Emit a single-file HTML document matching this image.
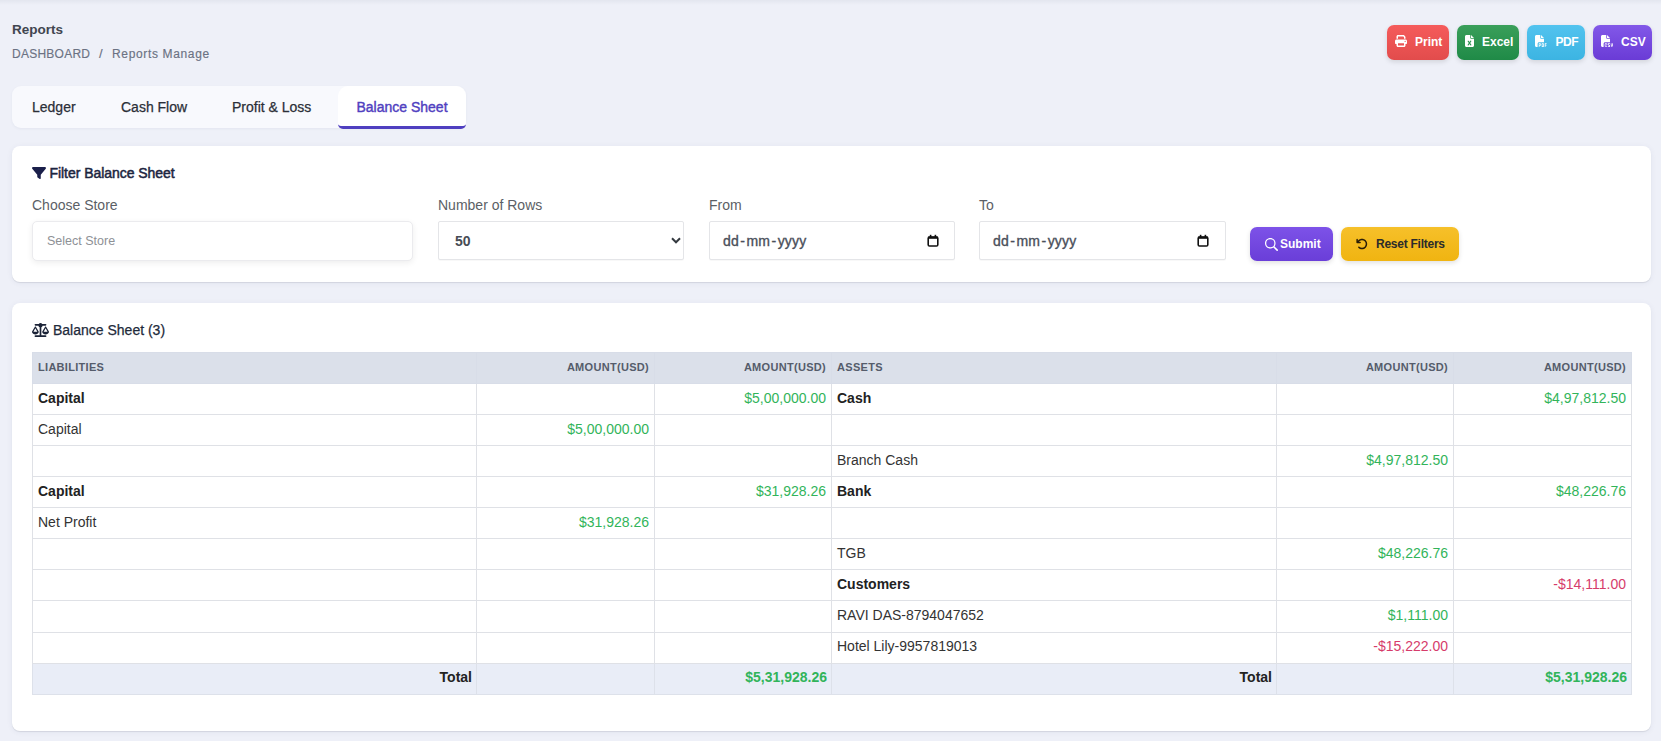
<!DOCTYPE html>
<html><head><meta charset="utf-8">
<style>
*{box-sizing:border-box;margin:0;padding:0}
html,body{width:1661px;height:741px;overflow:hidden}
body{position:relative;background:#eef0f8;font-family:"Liberation Sans",sans-serif;color:#333}
.abs{position:absolute;white-space:nowrap}
.ic{position:absolute;z-index:2}
.hy{font-style:normal;margin:0 1.3px}
.topshade{position:absolute;left:0;top:0;width:1661px;height:5px;background:linear-gradient(#e3e6ef,#eef0f8)}
.title{left:12px;top:21px;font-size:13.5px;line-height:17px;font-weight:bold;color:#40454f}
.crumb{top:46px;font-size:12px;line-height:16px;color:#6b7283;-webkit-text-stroke:0.15px #6b7283}
.btn{position:absolute;top:25px;height:35px;border-radius:7px;color:#fff;font-size:12px;font-weight:bold;line-height:35px;box-shadow:0 2px 5px rgba(0,0,0,.12)}
.btn svg{position:absolute}
.btn span{position:absolute;top:0}
.tabs{position:absolute;left:12px;top:86px;width:454px;height:42px;border-radius:9px;background:#f8f9fd;box-shadow:0 1px 3px rgba(40,50,100,.05)}
.tab{position:absolute;top:0px;height:41px;line-height:42px;-webkit-text-stroke:0.25px currentColor;font-size:14px;color:#2b2f38}
.tab.active{height:43px;background:#fff;border-radius:10px 10px 5px 5px;border-bottom:3px solid #4f3fc0;color:#5040c0;-webkit-text-stroke:0.4px #5040c0}
.card{position:absolute;background:#fff;border-radius:8px;box-shadow:0 1px 1px rgba(0,0,20,.09),0 1px 6px rgba(40,50,110,.06)}
.lbl{font-size:14px;line-height:16px;color:#5b5f66}

.inp{position:absolute;height:39px;border:1px solid #e4e5e8;border-radius:2px;background:#fff;box-shadow:0 1px 1px rgba(0,0,0,.03)}
table{position:absolute;left:32px;top:352px;border-collapse:collapse;table-layout:fixed;width:1599px}
td,th{height:31px;padding:0 5px 2px 5px;font-size:14px;border:1px solid #dfe1e6;white-space:nowrap;overflow:hidden}
th{background:#dbe0ea;font-size:11px;font-weight:bold;color:#555c6b;letter-spacing:.3px;text-align:left;border-color:#d8dde8}
.r{text-align:right}
.b{font-weight:bold;color:#222}
.g{color:#32b45a}
.n{color:#d63c6b}
.tall td{height:32px;padding-bottom:3px}
.hot td{padding-bottom:4px}
tfoot td{background:#e9edf7;font-weight:bold;padding-bottom:4px;border-color:#dde1ea}
tfoot td.r{padding-right:4px}
</style></head><body>
<div class="topshade"></div>
<div class="abs title">Reports</div>
<div class="abs crumb" style="left:12px;letter-spacing:0.25px">DASHBOARD</div><div class="abs crumb" style="left:99px;font-size:13px;top:45.5px">/</div><div class="abs crumb" style="left:112px;letter-spacing:0.65px">Reports Manage</div>

<div class="btn" style="left:1387px;width:62px;background:linear-gradient(#f55b5b,#e24c4c)"><svg style="left:8px;top:10px" width="12" height="12" viewBox="0 0 512 512"><path fill="#fff" d="M128 0C92.7 0 64 28.7 64 64v96h64V64H354.5L384 93.5V160h64V93.5c0-17-6.7-33.3-18.7-45.3L400 18.7C388 6.7 371.7 0 354.7 0H128zM384 352v32 64H128V384 368 352H384zm64 32h32c17.7 0 32-14.3 32-32V256c0-35.3-28.7-64-64-64H64c-35.3 0-64 28.7-64 64v96c0 17.7 14.3 32 32 32H64v64c0 35.3 28.7 64 64 64H384c35.3 0 64-28.7 64-64V384zM432 248a24 24 0 1 1 0 48 24 24 0 1 1 0-48z"/></svg><span style="left:28px">Print</span></div>
<div class="btn" style="left:1457px;width:62px;background:linear-gradient(#3a9f5a,#1f8a47)"><svg style="left:8px;top:10px" width="9" height="12" viewBox="0 0 384 512"><path fill="#fff" d="M64 0C28.7 0 0 28.7 0 64V448c0 35.3 28.7 64 64 64H320c35.3 0 64-28.7 64-64V160H256c-17.7 0-32-14.3-32-32V0H64zM256 0V128H384L256 0zM155.7 250.2L192 302.1l36.3-51.9c7.6-10.9 22.6-13.5 33.4-5.9s13.5 22.6 5.9 33.4L221.3 344l46.4 66.2c7.6 10.9 5 25.8-5.9 33.4s-25.8 5-33.4-5.9L192 385.8l-36.3 51.9c-7.6 10.9-22.6 13.5-33.4 5.9s-13.5-22.6-5.9-33.4L162.7 344l-46.4-66.2c-7.6-10.9-5-25.8 5.9-33.4s25.8-5 33.4 5.9z"/></svg><span style="left:25px">Excel</span></div>
<div class="btn" style="left:1527px;width:58px;background:linear-gradient(#52c3ef,#3cb4e2)"><svg style="left:8px;top:10px" width="12" height="12" viewBox="0 0 512 512"><path fill="#fff" d="M0 64C0 28.7 28.7 0 64 0H224V128c0 17.7 14.3 32 32 32H384V304H176c-35.3 0-64 28.7-64 64V512H64c-35.3 0-64-28.7-64-64V64zm384 64H256V0L384 128zM176 352h32c30.9 0 56 25.1 56 56s-25.1 56-56 56H192v32c0 8.800-7.2 16-16 16s-16-7.2-16-16V448 368c0-8.8 7.2-16 16-16zm32 80c13.3 0 24-10.7 24-24s-10.7-24-24-24H192v48h16zm96-80h32c26.5 0 48 21.5 48 48v64c0 26.5-21.5 48-48 48H304c-8.8 0-16-7.2-16-16V368c0-8.8 7.2-16 16-16zm32 128c8.8 0 16-7.2 16-16V400c0-8.8-7.2-16-16-16H320v96h16zm80-112c0-8.8 7.2-16 16-16h48c8.8 0 16 7.2 16 16s-7.2 16-16 16H448v32h32c8.8 0 16 7.2 16 16s-7.2 16-16 16H448v48c0 8.8-7.2 16-16 16s-16-7.2-16-16V432 368z"/></svg><span style="left:28.5px;letter-spacing:-0.4px">PDF</span></div>
<div class="btn" style="left:1593px;width:59px;background:linear-gradient(#8258e8,#6a3bd6)"><svg style="left:8px;top:10px" width="12" height="12" viewBox="0 0 512 512"><path fill="#fff" d="M0 64C0 28.7 28.7 0 64 0H224V128c0 17.7 14.3 32 32 32H384V304H176c-35.3 0-64 28.7-64 64V512H64c-35.3 0-64-28.7-64-64V64zm384 64H256V0L384 128zM200 352h16c22.1 0 40 17.9 40 40v8c0 8.8-7.2 16-16 16s-16-7.2-16-16v-8c0-4.400-3.6-8-8-8H200c-4.4 0-8 3.6-8 8v80c0 4.4 3.6 8 8 8h16c4.4 0 8-3.6 8-8v-8c0-8.8 7.2-16 16-16s16 7.2 16 16v8c0 22.1-17.9 40-40 40H200c-22.1 0-40-17.9-40-40V392c0-22.1 17.9-40 40-40zm133.1 0H368c8.8 0 16 7.2 16 16s-7.2 16-16 16H333.1c-7.2 0-13.1 5.9-13.1 13.1c0 5.2 3 9.9 7.8 12l37.4 16.6c16.3 7.2 26.8 23.4 26.8 41.2c0 24.9-20.2 45.1-45.1 45.1H304c-8.8 0-16-7.2-16-16s7.2-16 16-16h32.9c7.2 0 13.1-5.9 13.1-13.1c0-5.2-3-9.9-7.8-12l-37.4-16.6c-16.3-7.2-26.8-23.4-26.800-41.2c0-24.9 20.2-45.1 45.1-45.1zm98.9 0c8.8 0 16 7.2 16 16v31.6c0 23 5.5 45.6 16 66c10.5-20.3 16-42.9 16-66V368c0-8.8 7.2-16 16-16s16 7.2 16 16v31.6c0 34.7-10.3 68.7-29.6 97.6l-5.1 7.7c-3 4.5-8 7.1-13.3 7.1s-10.3-2.7-13.3-7.1l-5.1-7.7c-19.3-28.9-29.6-62.9-29.6-97.6V368c0-8.8 7.2-16 16-16z"/></svg><span style="left:28px">CSV</span></div>

<div class="tabs">
  <div class="tab" style="left:20px">Ledger</div>
  <div class="tab" style="left:109px">Cash Flow</div>
  <div class="tab" style="left:220px">Profit &amp; Loss</div>
  <div class="tab active" style="left:326px;width:128px;text-align:center">Balance Sheet</div>
</div>

<div class="card" style="left:12px;top:146px;width:1639px;height:136px"></div>
<div class="abs" style="left:49.5px;top:165px;font-size:14px;line-height:16px;font-weight:normal;-webkit-text-stroke:0.5px #1c2540;letter-spacing:-0.05px;color:#1c2540">Filter Balance Sheet</div>
<svg class="ic" style="left:32px;top:167px" width="14" height="12" viewBox="0 32 512 448" preserveAspectRatio="none"><path fill="#1a1f4a" d="M3.9 54.9C10.5 40.9 24.5 32 40 32H472c15.5 0 29.5 8.9 36.1 22.9s4.6 30.5-5.2 42.5L320 320.9V448c0 12.1-6.8 23.2-17.700 28.6s-23.8 4.3-33.5-3l-64-48c-8.1-6-12.8-15.5-12.8-25.6V320.9L9 97.3C-.7 85.4-2.8 68.8 3.9 54.9z"/></svg>
<svg class="ic" style="left:32px;top:323px" width="17" height="14" viewBox="0 0 640 512" preserveAspectRatio="none"><path fill="#1a2236" d="M384 32H512c17.7 0 32 14.3 32 32s-14.3 32-32 32H398.4c-5.2 25.8-22.9 47.1-46.4 57.3V448H512c17.7 0 32 14.3 32 32s-14.3 32-32 32H320 128c-17.7 0-32-14.3-32-32s14.3-32 32-32H288V153.3c-23.5-10.3-41.2-31.6-46.4-57.3H128c-17.7 0-32-14.3-32-32s14.3-32 32-32H256c14.6-19.4 37.8-32 64-32s49.4 12.6 64 32zm55.6 288H584.4L512 195.8 439.6 320zM512 416c-62.9 0-115.2-34-126-78.9c-2.6-11 1-22.3 6.7-32.1l95.2-163.2c5-8.6 14.2-13.8 24.1-13.8s19.1 5.3 24.1 13.8l95.2 163.2c5.7 9.8 9.3 21.1 6.7 32.1C627.2 382 574.9 416 512 416zM126.8 195.8L54.4 320H199.3L126.8 195.8zM.9 337.1c-2.6-11 1-22.3 6.7-32.1l95.2-163.2c5-8.6 14.2-13.8 24.1-13.8s19.1 5.3 24.1 13.8l95.2 163.2c5.7 9.8 9.3 21.1 6.7 32.1C242 382 189.7 416 126.8 416S11.7 382 .9 337.1z"/></svg>
<svg class="ic" style="left:671px;top:237px" width="10" height="7" viewBox="0 0 10 7"><path d="M1 1.3l4 4 4-4" fill="none" stroke="#343a40" stroke-width="2"/></svg>
<svg class="ic" style="left:927px;top:234px" width="12" height="13" viewBox="0 0 12 13"><rect x="1.2" y="3" width="9.6" height="9" rx="1.3" fill="none" stroke="#111" stroke-width="1.6"/><rect x="1" y="2.6" width="10" height="2.2" fill="#111"/><rect x="2.8" y="0.8" width="1.6" height="2.5" fill="#111"/><rect x="7.6" y="0.8" width="1.6" height="2.5" fill="#111"/></svg>
<svg class="ic" style="left:1197px;top:234px" width="12" height="13" viewBox="0 0 12 13"><rect x="1.2" y="3" width="9.6" height="9" rx="1.3" fill="none" stroke="#111" stroke-width="1.6"/><rect x="1" y="2.6" width="10" height="2.2" fill="#111"/><rect x="2.8" y="0.8" width="1.6" height="2.5" fill="#111"/><rect x="7.6" y="0.8" width="1.6" height="2.5" fill="#111"/></svg>
<div class="abs lbl" style="left:32px;top:197px">Choose Store</div>
<div class="abs lbl" style="left:438px;top:197px">Number of Rows</div>
<div class="abs lbl" style="left:709px;top:197px">From</div>
<div class="abs lbl" style="left:979px;top:197px">To</div>
<div class="inp" style="left:32px;top:221px;width:381px;height:40px;border-color:#ebebee;border-radius:5px;box-shadow:0 2px 6px rgba(0,0,0,.07)"></div>
<div class="abs" style="left:47px;top:234px;font-size:12.5px;line-height:15px;color:#8e9196">Select Store</div>
<div class="inp" style="left:438px;top:221px;width:246px"></div>
<div class="abs" style="left:455px;top:233px;font-size:14px;line-height:16px;font-weight:bold;color:#474c55">50</div>
<div class="inp" style="left:709px;top:221px;width:246px"></div>
<div class="abs" style="left:723px;top:233px;font-size:14px;line-height:16px;font-weight:normal;-webkit-text-stroke:0.35px #4a4f5a;letter-spacing:0.2px;color:#4a4f5a">dd<i class="hy">-</i>mm<i class="hy">-</i>yyyy</div>
<div class="inp" style="left:979px;top:221px;width:247px"></div>
<div class="abs" style="left:993px;top:233px;font-size:14px;line-height:16px;font-weight:normal;-webkit-text-stroke:0.35px #4a4f5a;letter-spacing:0.2px;color:#4a4f5a">dd<i class="hy">-</i>mm<i class="hy">-</i>yyyy</div>
<div class="btn" style="left:1250px;top:227px;width:83px;height:34px;line-height:34px;background:linear-gradient(#7d52e8,#6a3ed8)"><svg style="left:14.5px;top:10.5px" width="13" height="13" viewBox="0 0 512 512"><path fill="#fff" d="M416 208c0 45.9-14.9 88.3-40 122.7L502.6 457.4c12.5 12.5 12.5 32.8 0 45.3s-32.8 12.5-45.3 0L330.7 376c-34.4 25.2-76.8 40-122.7 40C93.1 416 0 322.9 0 208S93.1 0 208 0S416 93.1 416 208zM208 368a160 160 0 1 0 0-320 160 160 0 1 0 0 320z"/></svg><span style="left:30px">Submit</span></div>
<div class="btn" style="left:1341px;top:227px;width:118px;height:34px;line-height:34px;color:#2b2b2b;background:linear-gradient(#f6c02a,#f0b411)"><svg style="left:15px;top:11px" width="12" height="12" viewBox="0 0 512 512"><path fill="#2a1e08" d="M125.7 160H176c17.7 0 32 14.3 32 32s-14.3 32-32 32H48c-17.7 0-32-14.3-32-32V64c0-17.7 14.3-32 32-32s32 14.3 32 32v51.2L97.6 97.6c87.5-87.5 229.3-87.5 316.8 0s87.5 229.3 0 316.8s-229.3 87.5-316.8 0c-12.5-12.5-12.5-32.8 0-45.3s32.8-12.5 45.3 0c62.5 62.5 163.8 62.5 226.3 0s62.5-163.8 0-226.3s-163.8-62.5-226.3 0L125.7 160z"/></svg><span style="left:35px;letter-spacing:-0.25px">Reset Filters</span></div>

<div class="card" style="left:12px;top:303px;width:1639px;height:428px"></div>
<div class="abs" style="left:53px;top:322px;font-size:14px;line-height:16px;-webkit-text-stroke:0.25px #1e2a3b;color:#1e2a3b">Balance Sheet (3)</div>

<table>
<colgroup><col style="width:444px"><col style="width:178px"><col style="width:177px"><col style="width:445px"><col style="width:177px"><col style="width:178px"></colgroup>
<thead><tr><th>LIABILITIES</th><th class="r">AMOUNT(USD)</th><th class="r">AMOUNT(USD)</th><th>ASSETS</th><th class="r">AMOUNT(USD)</th><th class="r">AMOUNT(USD)</th></tr></thead>
<tbody>
<tr><td class="b">Capital</td><td></td><td class="r g">$5,00,000.00</td><td class="b">Cash</td><td></td><td class="r g">$4,97,812.50</td></tr>
<tr><td>Capital</td><td class="r g">$5,00,000.00</td><td></td><td></td><td></td><td></td></tr>
<tr><td></td><td></td><td></td><td>Branch Cash</td><td class="r g">$4,97,812.50</td><td></td></tr>
<tr><td class="b">Capital</td><td></td><td class="r g">$31,928.26</td><td class="b">Bank</td><td></td><td class="r g">$48,226.76</td></tr>
<tr><td>Net Profit</td><td class="r g">$31,928.26</td><td></td><td></td><td></td><td></td></tr>
<tr><td></td><td></td><td></td><td>TGB</td><td class="r g">$48,226.76</td><td></td></tr>
<tr><td></td><td></td><td></td><td class="b">Customers</td><td></td><td class="r n">-$14,111.00</td></tr>
<tr class="tall"><td></td><td></td><td></td><td>RAVI DAS-8794047652</td><td class="r g">$1,111.00</td><td></td></tr>
<tr class="hot"><td></td><td></td><td></td><td>Hotel Lily-9957819013</td><td class="r n">-$15,222.00</td><td></td></tr>
</tbody>
<tfoot><tr><td class="r b">Total</td><td></td><td class="r g">$5,31,928.26</td><td class="r b">Total</td><td></td><td class="r g">$5,31,928.26</td></tr></tfoot>
</table>
</body></html>
